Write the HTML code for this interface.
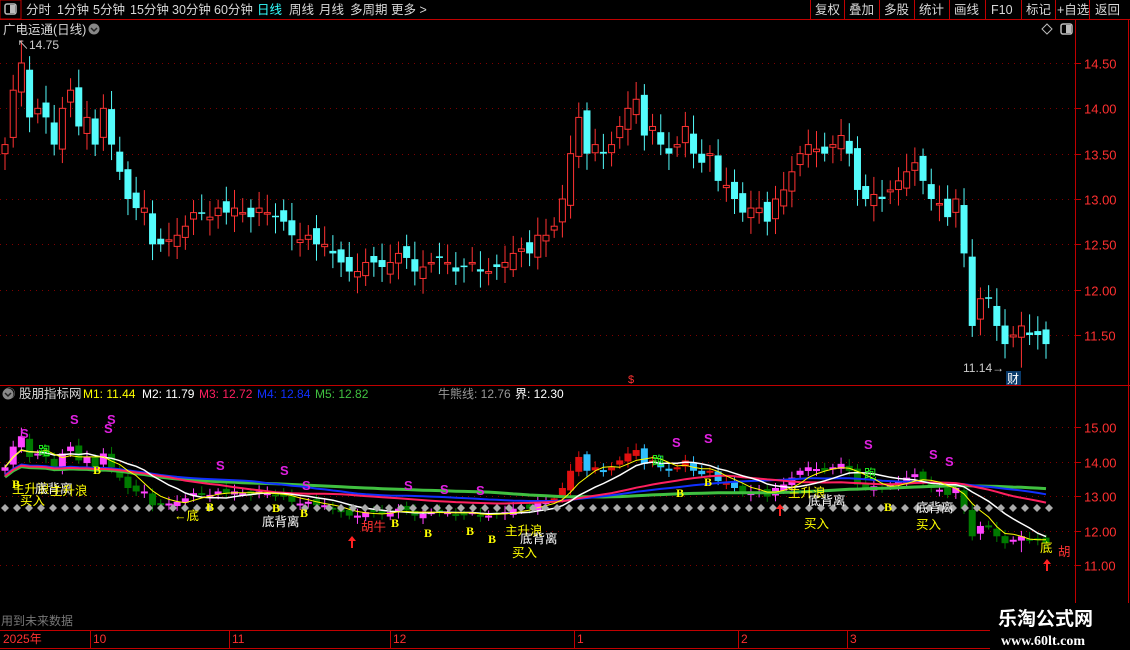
<!DOCTYPE html>
<html><head><meta charset="utf-8">
<style>
html,body{margin:0;padding:0;background:#000;width:1130px;height:650px;overflow:hidden;font-family:"Liberation Sans","Noto Sans CJK SC",sans-serif;}
#wrap{position:relative;width:1130px;height:650px;}
svg{position:absolute;left:0;top:0;}
</style></head><body><div id="wrap">
<svg id="s" width="1130" height="650" xmlns="http://www.w3.org/2000/svg" font-family="Liberation Sans, Noto Sans CJK SC, sans-serif">
<!-- top bar -->
<line x1="0" y1="19.5" x2="1130" y2="19.5" stroke="#c00000"/>
<rect x="0" y="0" width="21" height="19" fill="none" stroke="#c00000"/>
<rect x="5" y="4" width="11" height="10" rx="2" fill="none" stroke="#bbb" stroke-width="1.5"/><rect x="10" y="5" width="5" height="8" fill="#bbb"/>
<g fill="#d8d8d8" font-size="12.5">
<text x="26" y="14">分时</text><text x="57" y="14">1分钟</text><text x="93" y="14">5分钟</text><text x="130" y="14">15分钟</text><text x="172" y="14">30分钟</text><text x="214" y="14">60分钟</text>
<text x="257" y="14" fill="#3ff">日线</text><text x="289" y="14">周线</text><text x="319" y="14">月线</text><text x="350" y="14">多周期</text><text x="391" y="14">更多 &gt;</text>
</g>
<g stroke="#c00000"><line x1="810.5" y1="0" x2="810.5" y2="19"/><line x1="844.5" y1="0" x2="844.5" y2="19"/><line x1="879.5" y1="0" x2="879.5" y2="19"/><line x1="914.5" y1="0" x2="914.5" y2="19"/><line x1="949.5" y1="0" x2="949.5" y2="19"/><line x1="985.5" y1="0" x2="985.5" y2="19"/><line x1="1021.5" y1="0" x2="1021.5" y2="19"/><line x1="1055.5" y1="0" x2="1055.5" y2="19"/><line x1="1089.5" y1="0" x2="1089.5" y2="19"/></g>
<g fill="#d8d8d8" font-size="12.5"><text x="815" y="14">复权</text><text x="849" y="14">叠加</text><text x="884" y="14">多股</text><text x="919" y="14">统计</text><text x="954" y="14">画线</text><text x="991" y="14">F10</text><text x="1026" y="14">标记</text><text x="1057" y="14">+自选</text><text x="1095" y="14">返回</text></g>
<!-- frame -->
<line x1="1075.5" y1="20" x2="1075.5" y2="630" stroke="#c00000"/>
<line x1="1128.5" y1="20" x2="1128.5" y2="630" stroke="#c00000"/>
<line x1="0" y1="385.5" x2="1130" y2="385.5" stroke="#c00000"/>
<line x1="0" y1="630.5" x2="1075" y2="630.5" stroke="#c00000"/>
<line x1="0" y1="648.5" x2="1075" y2="648.5" stroke="#c00000"/>
<text x="3" y="34" fill="#d8d8d8" font-size="12.5">广电运通(日线)</text>
<circle cx="94" cy="29" r="5.5" fill="#888"/><path d="M91 28 l3 3 l3 -3" stroke="#222" fill="none" stroke-width="1.5"/>
<path d="M1042 29 l5 -5 l5 5 l-5 5z" fill="none" stroke="#bbb"/>
<rect x="1061" y="24" width="11" height="10" rx="2" fill="none" stroke="#bbb" stroke-width="1.5"/><rect x="1066" y="25" width="5" height="8" fill="#bbb"/>
<text x="3" y="398" fill="#d8d8d8" font-size="12.5"><tspan fill="#888">◉</tspan> 股朋指标网</text>
<circle cx="8" cy="394" r="5.5" fill="#888"/><path d="M5 393 l3 3 l3 -3" stroke="#222" fill="none" stroke-width="1.5"/>
<g font-size="12"><text x="83" y="398" fill="#ff0">M1: 11.44</text><text x="142" y="398" fill="#fff">M2: 11.79</text><text x="199" y="398" fill="#ff2060">M3: 12.72</text><text x="257" y="398" fill="#1030ff">M4: 12.84</text><text x="315" y="398" fill="#40c040">M5: 12.82</text><text x="438" y="398" fill="#999">牛熊线: 12.76</text><text x="515" y="398" fill="#fff">界: 12.30</text></g>
<text x="1" y="625" fill="#777" font-size="12">用到未来数据</text>
<g fill="#ff3030" font-size="12"><text x="3" y="643">2025年</text><text x="93" y="643">10</text><text x="232" y="643">11</text><text x="393" y="643">12</text><text x="577" y="643">1</text><text x="741" y="643">2</text><text x="850" y="643">3</text></g>
<g stroke="#c00000"><line x1="90.5" y1="630" x2="90.5" y2="648"/><line x1="229.5" y1="630" x2="229.5" y2="648"/><line x1="390.5" y1="630" x2="390.5" y2="648"/><line x1="574.5" y1="630" x2="574.5" y2="648"/><line x1="738.5" y1="630" x2="738.5" y2="648"/><line x1="847.5" y1="630" x2="847.5" y2="648"/></g>
<g id="dyn"></g>
<rect x="990" y="603" width="140" height="47" fill="#000"/>
<text x="998" y="625" fill="#fff" font-size="19" font-weight="bold">乐淘公式网</text>
<text x="1001" y="645" fill="#fff" font-size="14" font-weight="bold" font-family="Liberation Serif, serif">www.60lt.com</text>
</svg>
<script>
var C=[13.6,14.2,14.5,13.9,14.0,13.9,13.6,14.0,14.2,13.8,13.9,13.6,14.0,13.6,13.3,13.0,12.9,12.9,12.5,12.5,12.55,12.6,12.7,12.85,12.85,12.8,12.9,12.85,12.9,12.85,12.8,12.9,12.85,12.8,12.75,12.6,12.55,12.6,12.5,12.5,12.4,12.3,12.2,12.2,12.3,12.3,12.25,12.3,12.4,12.35,12.2,12.25,12.3,12.35,12.3,12.2,12.25,12.3,12.2,12.2,12.25,12.3,12.4,12.45,12.4,12.6,12.6,12.7,13.0,13.5,13.9,13.5,13.6,13.5,13.6,13.8,14.0,14.1,13.7,13.8,13.6,13.5,13.6,13.8,13.5,13.4,13.5,13.2,13.15,13.0,12.85,12.9,12.9,12.75,13.0,13.1,13.3,13.5,13.6,13.55,13.5,13.6,13.7,13.5,13.1,13.0,13.05,13.0,13.1,13.2,13.3,13.4,13.2,13.0,12.95,12.8,13.0,12.4,11.6,11.9,11.9,11.6,11.4,11.5,11.6,11.5,11.5,11.4];
var N=C.length,dx=(1046-5)/(N-1);
function X(i){return 5+i*dx;}
function Y(p){return 63+(14.5-p)*90.67;}
function Y2(p){return 427+(15-p)*34.5;}
var h='';
// grid
[14.5,14,13.5,13,12.5,12,11.5].forEach(function(p){var y=Math.round(Y(p))+.5;h+='<line x1="0" y1="'+y+'" x2="1075" y2="'+y+'" stroke="#800000" stroke-dasharray="1 5"/><line x1="1075" y1="'+y+'" x2="1081" y2="'+y+'" stroke="#c00000"/><text x="1084" y="'+(y+5)+'" fill="#ff3030" font-size="13">'+p.toFixed(2)+'</text>';});
[15,14,13,12,11].forEach(function(p){var y=Math.round(Y2(p))+.5;h+='<line x1="0" y1="'+y+'" x2="1075" y2="'+y+'" stroke="#800000" stroke-dasharray="1 5"/><line x1="1075" y1="'+y+'" x2="1081" y2="'+y+'" stroke="#c00000"/><text x="1084" y="'+(y+5)+'" fill="#ff3030" font-size="13">'+p.toFixed(2)+'</text>';});
// candles
for(var i=0;i<N;i++){var c=C[i],o=i?C[i-1]+(Math.sin(i*1.7)*0.08):c-0.1;var up=c>=o;var hi=Math.max(o,c)+0.08+Math.abs(Math.sin(i*2.3))*0.12,lo=Math.min(o,c)-0.08-Math.abs(Math.cos(i*1.9))*0.1;if(i==2)hi=14.75;if(i==124)lo=11.14;
var x=X(i),t=Y(Math.max(o,c)),b=Y(Math.min(o,c));if(b-t<1.5)b=t+1.5;
var col=up?'#ff3232':'#54fcfc';
h+='<line x1="'+x+'" y1="'+Y(hi)+'" x2="'+x+'" y2="'+Y(lo)+'" stroke="'+col+'"/>';
h+=up?'<rect x="'+(x-3)+'" y="'+t+'" width="6" height="'+(b-t)+'" fill="#000" stroke="'+col+'"/>':'<rect x="'+(x-3.5)+'" y="'+t+'" width="7" height="'+(b-t)+'" fill="'+col+'"/>';
// lower
var t2=Y2(Math.max(o,c))-8,b2=Y2(Math.min(o,c))-8;if(b2-t2<2)b2=t2+2;
var c2=up?((i>66&&i<90)?'#e01010':'#ff44ff'):((i>66&&i<90)?'#30c0ff':'#007a00');
h+='<line x1="'+x+'" y1="'+(Y2(hi)-8)+'" x2="'+x+'" y2="'+(Y2(lo)-8)+'" stroke="'+c2+'"/><rect x="'+(x-3.5)+'" y="'+t2+'" width="7" height="'+(b2-t2)+'" fill="'+c2+'"/>';}
// MAs in lower pane
function ma(n,col,w){var pts=[];for(var i=0;i<N;i++){var s=0,k=0;for(var j=Math.max(0,i-n+1);j<=i;j++){s+=C[j];k++;}var v=s/k;if(n>=20)v=v*0.6+12.9*0.4+(n==20?0.03:n==30?0.06:0);pts.push(X(i).toFixed(1)+','+(Y2(v)-8).toFixed(1));}h+='<polyline points="'+pts.join(' ')+'" fill="none" stroke="'+col+'" stroke-width="'+w+'"/>';}
ma(60,'#40c040',3);ma(30,'#1030ff',2);ma(20,'#ff2060',2);ma(10,'#fff',1.5);ma(5,'#ff0',1);
for(var x=5;x<1050;x+=12)h+='<path d="M'+x+' 504 l4 4 l-4 4 l-4 -4z" fill="#aaa"/>';
var S=[[70,424],[104,433],[107,424],[216,470],[280,475],[302,490],[404,490],[440,494],[476,495],[672,447],[704,443],[864,449],[929,459],[945,466],[20,438]];
S.forEach(function(s){h+='<text x="'+s[0]+'" y="'+s[1]+'" fill="#e020e0" font-size="13" font-weight="bold">S</text>';});
var B=[[12,488],[93,474],[206,511],[272,512],[300,517],[391,527],[424,537],[466,535],[488,543],[676,497],[704,486],[884,511]];
B.forEach(function(s){h+='<text x="'+s[0]+'" y="'+s[1]+'" fill="#ff0" font-size="12" font-weight="bold" font-family="Liberation Serif,serif">B</text>';});
var T=[[12,493,'#ff0','主升浪'],[35,493,'#fff','底背离'],[50,495,'#ff0','主升浪'],[20,505,'#ff0','买入'],[38,455,'#2f2','跑'],[174,520,'#ff0','←底'],[262,526,'#fff','底背离'],[361,531,'#f33','胡牛'],[505,535,'#ff0','主升浪'],[520,543,'#fff','底背离'],[512,557,'#ff0','买入'],[652,465,'#2f2','跑'],[788,497,'#ff0','主升浪'],[808,505,'#fff','底背离'],[804,528,'#ff0','买入'],[864,478,'#2f2','跑'],[916,512,'#fff','底背离'],[916,529,'#ff0','买入'],[1040,552,'#ff0','底'],[1058,556,'#f33','胡']];
T.forEach(function(t){h+='<text x="'+t[0]+'" y="'+t[1]+'" fill="'+t[2]+'" font-size="12.5">'+t[3]+'</text>';});
[[352,548],[780,516],[1047,571]].forEach(function(a){h+='<path d="M'+a[0]+' '+(a[1]-12)+' l-4 5 h3 v7 h2 v-7 h3z" fill="#f22"/>';});
h+='<text x="17" y="49" fill="#ccc" font-size="12">↖14.75</text><text x="963" y="372" fill="#ccc" font-size="12">11.14→</text><rect x="1006" y="371" width="15" height="14" fill="#0a3a6a"/><text x="1007" y="383" fill="#fff" font-size="12">财</text><text x="628" y="383" fill="#f33" font-size="11">$</text>';
document.getElementById('dyn').innerHTML=h;
</script>
</div></body></html>
